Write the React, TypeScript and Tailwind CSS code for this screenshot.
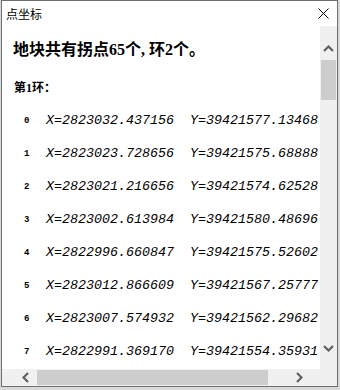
import React from 'react';

type Pt = { x: string; y: string };

const points: Pt[] = [
  { x: '2823032.437156', y: '39421577.13468' },
  { x: '2823023.728656', y: '39421575.68888' },
  { x: '2823021.216656', y: '39421574.62528' },
  { x: '2823002.613984', y: '39421580.48696' },
  { x: '2822996.660847', y: '39421575.52602' },
  { x: '2823012.866609', y: '39421567.25777' },
  { x: '2823007.574932', y: '39421562.29682' },
  { x: '2822991.369170', y: '39421554.35931' },
];

const mono = { fontFamily: '"Liberation Mono", "Courier New", monospace' };

function Chevron({ dir }: { dir: 'up' | 'down' | 'left' | 'right' }) {
  const d = {
    up: 'M1 6 L5.5 1.5 L10 6',
    down: 'M1 1 L5.5 5.5 L10 1',
    left: 'M6 1 L1.5 5.5 L6 10',
    right: 'M1 1 L5.5 5.5 L1 10',
  }[dir];
  const vertical = dir === 'up' || dir === 'down';
  return (
    <svg width={vertical ? 11 : 7} height={vertical ? 7 : 11} viewBox={vertical ? '0 0 11 7' : '0 0 7 11'}>
      <path d={d} fill="none" stroke="#606060" strokeWidth="2.2" />
    </svg>
  );
}

export default function App() {
  return (
    <div className="w-[340px] h-[390px] bg-[#d9d9d9] overflow-hidden">
      <div className="ml-[1px] w-[337px] h-[387px] border border-[#6e6e6e] bg-white flex flex-col">
        {/* title bar */}
        <div className="h-[25px] flex items-center justify-between pl-[4px] pr-[8px] shrink-0">
          <span className="text-[12px] leading-[14px] text-black" style={{ fontFamily: '"Noto Sans CJK SC", sans-serif' }}>点坐标</span>
          <svg width="11" height="11" viewBox="0 0 11 11">
            <path d="M0.5 0.5 L10.5 10.5 M10.5 0.5 L0.5 10.5" stroke="#000" strokeWidth="1" />
          </svg>
        </div>

        <div className="flex flex-1 min-h-0">
          {/* content */}
          <div className="flex-1 min-w-0 overflow-hidden whitespace-nowrap pl-[11px] pt-[14px] text-black">
            <div className="text-[16px] leading-[20px] font-bold" style={{ fontFamily: '"Liberation Serif", "Noto Sans CJK SC", serif' }}>
              地块共有拐点65个, 环2个。
            </div>
            <div className="mt-[21px] text-[12px] leading-[14px] font-bold pl-[1px]" style={{ fontFamily: '"Liberation Serif", "Noto Sans CJK SC", serif' }}>
              第1环：
            </div>
            <div className="mt-[9px]">
              {points.map((p, i) => (
                <div key={i} className="h-[33px] flex items-center">
                  <span className="w-[33px] shrink-0 pl-[11px] pt-[2px] text-[9px] font-bold text-black" style={mono}>{i}</span>
                  <span className="shrink-0 italic text-[13.33px] whitespace-pre text-black" style={mono}>
                    X={p.x}  Y={p.y}
                  </span>
                </div>
              ))}
            </div>
          </div>

          {/* vertical scrollbar */}
          <div className="w-[17px] bg-[#f0f0f0] flex flex-col items-center shrink-0">
            <div className="h-[34px] pt-[19px]">
              <Chevron dir="up" />
            </div>
            <div className="w-[15px] h-[40px] bg-[#cdcdcd]" />
            <div className="flex-1" />
            <div className="pb-[17px]">
              <Chevron dir="down" />
            </div>
          </div>
        </div>

        {/* horizontal scrollbar */}
        <div className="h-[17px] flex shrink-0">
          <div className="flex-1 bg-[#f0f0f0] flex items-center">
            <div className="w-[35px] pl-[20px]">
              <Chevron dir="left" />
            </div>
            <div className="w-[231px] h-[15px] bg-[#cdcdcd]" />
            <div className="flex-1 flex justify-end pr-[17px]">
              <Chevron dir="right" />
            </div>
          </div>
          <div className="w-[17px] bg-[#f0f0f0]" />
        </div>
      </div>
    </div>
  );
}
